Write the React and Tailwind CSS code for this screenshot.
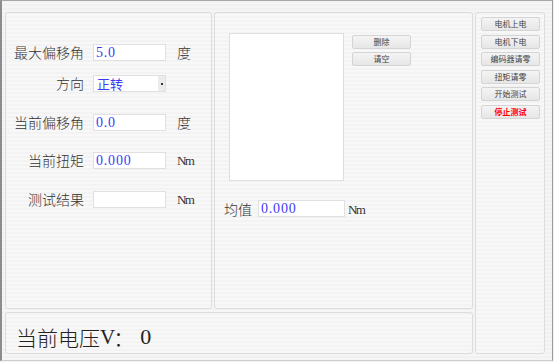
import React from 'react';

const cjk = "font-['Noto_Sans_CJK_SC',sans-serif]";
const serif = "font-['Liberation_Serif','Noto_Sans_CJK_SC',serif]";
const panel = 'border border-[#dcdcdc] rounded-[3px] bg-[repeating-linear-gradient(0deg,#f8f8f8_0px,#f8f8f8_2px,#f3f3f3_2px,#f3f3f3_4px)]';
const valueText = `text-[14px] leading-[15px] tracking-[0.8px] text-[#3c3cf5] ${serif}`;
const unitNm = `text-[13px] tracking-[-1.6px] text-[#333] ${serif}`;

function Field({ label, value, unit, top }) {
  return (
    <div className="flex items-center" style={{ marginTop: top }}>
      <span className={`w-[78px] text-right text-[14px] leading-[17px] text-[#333] font-light ${cjk}`}>{label}</span>
      <div className={`ml-[9px] w-[73px] h-[17px] bg-white border border-[#e0e0e0] pl-[2px] ${valueText}`}>
        {value}
      </div>
      <span className={`ml-[11px] leading-[17px] ${unit === '度' ? `text-[14px] text-[#333] font-light ${cjk}` : unitNm}`}>{unit}</span>
    </div>
  );
}

function SmallButton({ children, red }) {
  return (
    <div
      className={`w-[59px] h-[14px] shrink-0 flex items-center justify-center border border-[#d4d4d4] rounded-[2px] bg-[linear-gradient(#f4f4f4,#e6e6e6)] text-[8px] leading-none ${cjk} ${
        red ? 'text-[#f00] font-bold' : 'text-[#444]'
      }`}
    >
      {children}
    </div>
  );
}

export default function App() {
  return (
    <div className="w-[554px] h-[362px] bg-[#f2f2f2]">
      <div className="w-[553px] h-[361px] border-t border-t-[#a8a8a8] border-l-2 border-l-[#8c8c8c] border-r border-r-[#9a9a9a] border-b border-b-[#cfcfcf] flex pt-[11px] pl-[3px] bg-[repeating-linear-gradient(0deg,#f5f5f5_0px,#f5f5f5_2px,#f1f1f1_2px,#f1f1f1_4px)]">
        <div className="flex flex-col w-[468px] shrink-0">
          <div className="flex h-[297px] gap-[2px]">
            {/* parameters */}
            <div className={`w-[207px] shrink-0 ${panel} pt-[31px]`}>
              <Field label="最大偏移角" value="5.0" unit="度" top={0} />
              <div className="flex items-center mt-[14px]">
                <span className={`w-[78px] text-right text-[14px] leading-[17px] text-[#333] font-light ${cjk}`}>方向</span>
                <div className="ml-[9px] w-[73px] h-[17px] bg-white border border-[#e0e0e0] flex">
                  <span className={`flex-1 pl-[3px] text-[13px] leading-[15px] text-[#3c3cf5] ${cjk}`}>正转</span>
                  <span className="w-[7px] h-full bg-[#ececec] flex items-center justify-center">
                    <span className="w-[2px] h-[2px] bg-[#333]" />
                  </span>
                </div>
              </div>
              <Field label="当前偏移角" value="0.0" unit="度" top={22} />
              <Field label="当前扭矩" value="0.000" unit="Nm" top={21} />
              <Field label="测试结果" value="" unit="Nm" top={22} />
            </div>

            {/* list */}
            <div className={`w-[259px] shrink-0 ${panel} pt-[20px]`}>
              <div className="flex pl-[14px]">
                <div className="w-[115px] h-[148px] bg-white border border-[#dedede]" />
                <div className="ml-[8px] mt-[2px] flex flex-col gap-[3px]">
                  <SmallButton>删除</SmallButton>
                  <SmallButton>请空</SmallButton>
                </div>
              </div>
              <div className="flex items-center pl-[9px] mt-[16px]">
                <span className={`text-[14px] leading-[17px] text-[#333] font-light mt-[3px] ${cjk}`}>均值</span>
                <div className={`ml-[6px] w-[87px] h-[17px] bg-white border border-[#e0e0e0] pl-[2px] ${valueText}`}>
                  0.000
                </div>
                <span className={`ml-[3px] mt-[3px] ${unitNm}`}>Nm</span>
              </div>
            </div>
          </div>

          {/* voltage */}
          <div className={`mt-[3px] h-[42px] ${panel} flex items-center pl-[10px] pt-[8px] text-[#222]`}>
            <span className={`text-[21px] leading-none font-light ${cjk}`}>当前电压</span>
            <span className={`text-[21px] leading-none tracking-[-2px] ${serif}`}>V</span>
            <span className={`text-[21px] leading-none font-light ${cjk}`}>：</span>
            <span className={`ml-[6px] text-[22px] leading-none ${serif}`}>0</span>
          </div>
        </div>

        {/* actions */}
        <div className={`ml-[2px] w-[70px] h-[342px] shrink-0 ${panel} pt-[4px] pl-[5px] flex flex-col gap-[3.6px]`}>
          <SmallButton>电机上电</SmallButton>
          <SmallButton>电机下电</SmallButton>
          <SmallButton>编码器请零</SmallButton>
          <SmallButton>扭矩请零</SmallButton>
          <SmallButton>开始测试</SmallButton>
          <SmallButton red>停止测试</SmallButton>
        </div>
      </div>
    </div>
  );
}
